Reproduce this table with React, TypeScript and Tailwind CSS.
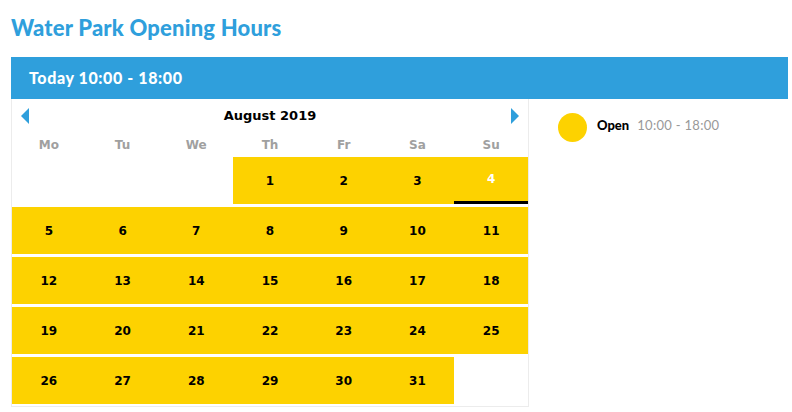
import React from 'react';

const days = ['Mo', 'Tu', 'We', 'Th', 'Fr', 'Sa', 'Su'];

// August 2019 starts on a Thursday
const cells: (number | null)[] = [null, null, null, ...Array.from({ length: 31 }, (_, i) => i + 1)];
while (cells.length % 7) cells.push(null);
const weeks: (number | null)[][] = [];
for (let i = 0; i < cells.length; i += 7) weeks.push(cells.slice(i, i + 7));

const App: React.FC = () => {
    return (
        <div className="w-[792px] h-[412px] bg-white overflow-hidden">
            <h1 className="pt-[13px] pl-[11px] text-[22px] leading-[30px] font-black text-[#2f9fdc] font-['Lato',sans-serif] tracking-[0.2px]">
                Water Park Opening Hours
            </h1>

            <div className="mt-[14px] ml-[11px] mr-[4px] h-[42px] bg-[#2f9fdc] flex items-center pl-[18px]">
                <span className="text-white font-black text-[16px] tracking-[0.6px] font-['Lato',sans-serif]">Today 10:00 - 18:00</span>
            </div>

            <div className="flex">
                <div className="ml-[11px] w-[518px] border-x border-b border-[#ececec] pb-[2px] font-['DejaVu_Sans',sans-serif]">
                    <div className="h-[33px] flex items-center justify-between px-[9px] pt-[1px]">
                        <button aria-label="Previous month" className="w-[8px] h-[16px]">
                            <svg viewBox="0 0 8 16" className="w-[8px] h-[16px]"><path d="M8 0 L0 8 L8 16 Z" fill="#2f9fdc" /></svg>
                        </button>
                        <span className="text-[13px] font-bold text-black">August 2019</span>
                        <button aria-label="Next month" className="w-[8px] h-[16px]">
                            <svg viewBox="0 0 8 16" className="w-[8px] h-[16px]"><path d="M0 0 L8 8 L0 16 Z" fill="#2f9fdc" /></svg>
                        </button>
                    </div>
                    <div className="grid grid-cols-7 h-[25px] items-center">
                        {days.map(d => (
                            <div key={d} className="text-center text-[12px] font-bold text-[#a0a0a0]">{d}</div>
                        ))}
                    </div>
                    <div className="flex flex-col gap-[3px]">
                        {weeks.map((w, wi) => (
                            <div key={wi} className="grid grid-cols-7 h-[47px]">
                                {w.map((d, di) => (
                                    d === null ? (
                                        <div key={di} />
                                    ) : (
                                        <div
                                            key={di}
                                            className={d === 4
                                                ? 'bg-[#fdd200] flex items-center justify-center text-[12px] font-bold text-white border-b-[3px] border-black'
                                                : 'bg-[#fdd200] flex items-center justify-center text-[12px] font-bold text-black'}
                                        >
                                            {d}
                                        </div>
                                    )
                                ))}
                            </div>
                        ))}
                    </div>
                </div>

                <div className="pl-[29px] pt-[14px]">
                    <div className="flex items-start gap-[10px]">
                        <div className="w-[29px] h-[29px] rounded-full bg-[#fdd200]" />
                        <div className="pt-[3px] flex items-baseline gap-[8px] font-['Lato',sans-serif] text-[13px]">
                            <span className="font-black text-black">Open</span>
                            <span className="text-[#999] tracking-[0.3px]">10:00 - 18:00</span>
                        </div>
                    </div>
                </div>
            </div>
        </div>
    );
};

export default App;
